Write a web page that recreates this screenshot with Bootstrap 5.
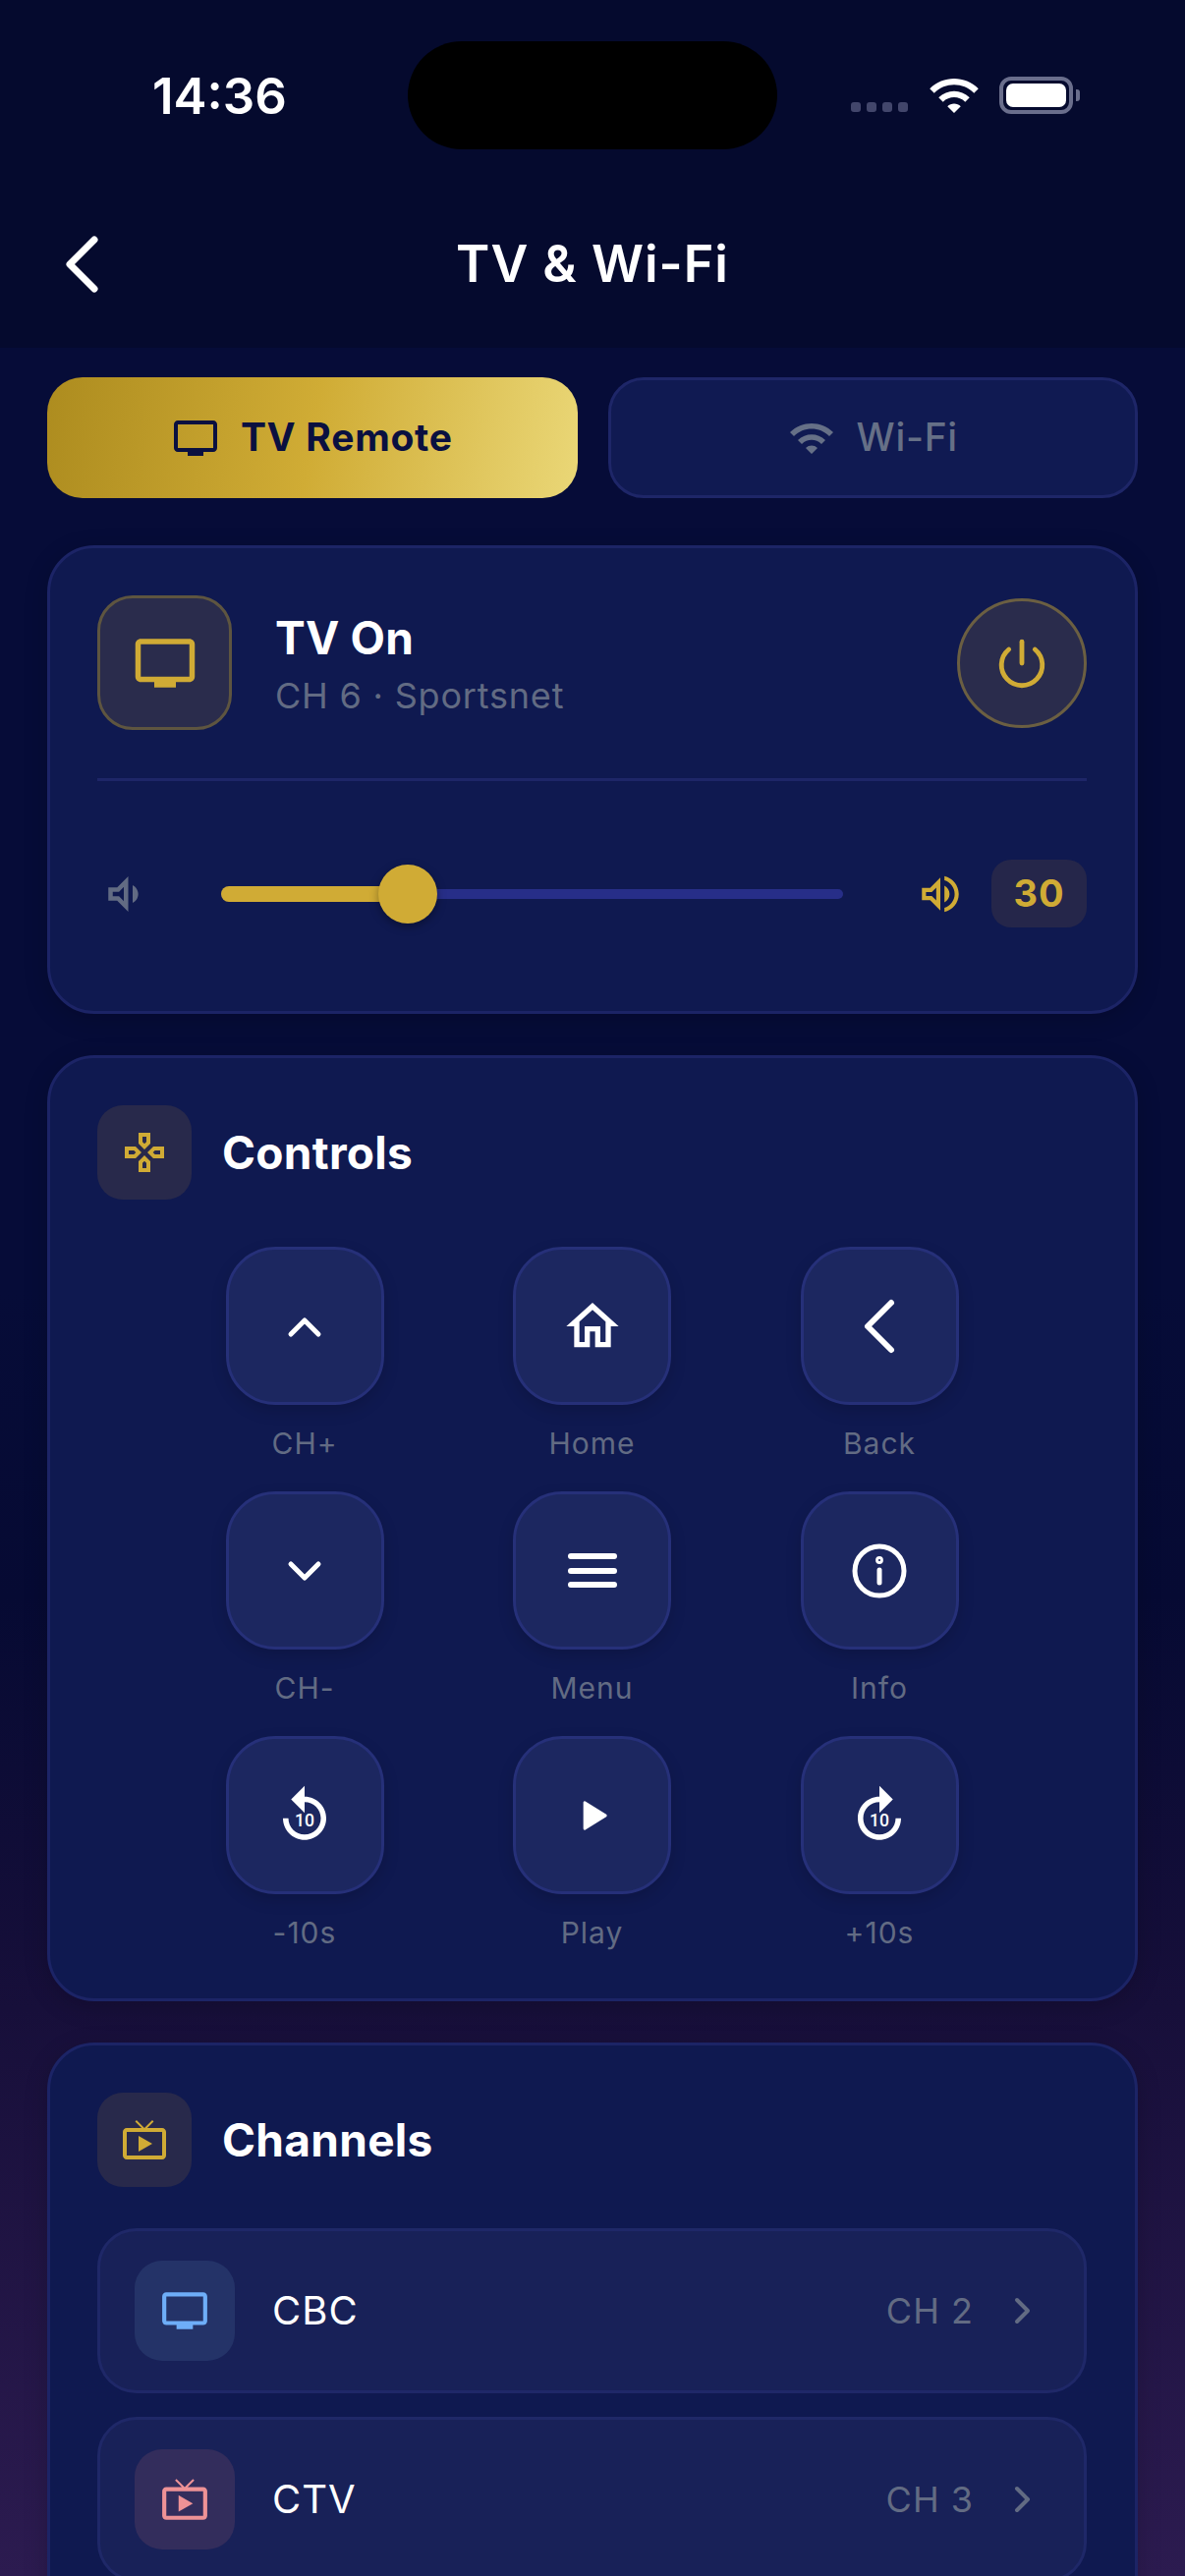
<!DOCTYPE html>
<html lang="en">

<head>
    <meta charset="UTF-8">
    <meta name="viewport" content="width=device-width, initial-scale=1.0">
    <title>TV &amp; Wi-Fi</title>
    <link href="https://cdn.jsdelivr.net/npm/bootstrap@5.3.0/dist/css/bootstrap.min.css" rel="stylesheet">
    <style>
        html, body {
            height: 2622px;
            overflow: hidden;
        }

        body {
            font-family: Inter, "Liberation Sans", sans-serif;
            color: #fff;
            background: linear-gradient(180deg, #060c38 0%, #060c38 50%, #060a33 62%, #170f3a 78%, #2c1b50 100%);
        }

        svg {
            display: block;
            flex-shrink: 0;
        }

        .top-head {
            height: 354px;
            background: #050a2e;
        }

        .status-row {
            height: 194px;
            padding: 0 107px 0 155px;
        }

        .clock {
            font-size: 51px;
            font-weight: 600;
            line-height: 1;
            margin-top: 1px;
        }

        .island {
            position: absolute;
            left: 415px;
            top: 42px;
            width: 376px;
            height: 110px;
            border-radius: 55px;
            background: #000;
        }

        .sig-row {
            column-gap: 6px;
            margin-top: 24px;
            margin-right: 20px;
        }

        .sig-dot {
            width: 10px;
            height: 10px;
            border-radius: 3px;
            background: #42466b;
        }

        .wifi-mark {
            margin-right: 19px;
        }

        .batt {
            width: 75px;
            height: 38px;
            border: 4px solid #6a6e8c;
            border-radius: 12px;
            padding: 3px;
        }

        .batt span {
            display: block;
            height: 100%;
            border-radius: 7px;
            background: #fff;
        }

        .batt-tip {
            width: 4px;
            height: 12px;
            border-radius: 0 3px 3px 0;
            background: #6a6e8c;
            margin-left: 3px;
        }

        .nav-row {
            height: 160px;
            padding: 0 0 10px 60px;
        }

        .nav-title {
            font-size: 52px;
            font-weight: 600;
            letter-spacing: 1px;
            line-height: 1;
            flex: 1;
            text-align: center;
            margin-right: 60px;
            padding-right: 44px;
        }

        .page-body {
            padding: 30px 48px 0;
        }

        .tab-wrap {
            display: grid;
            grid-template-columns: 1fr 1fr;
            column-gap: 31px;
        }

        .tab-btn {
            height: 123px;
            border-radius: 36px;
            font-size: 39px;
            gap: 22px;
            letter-spacing: .7px;
        }

        .tab-on,
        .tab-on:hover {
            color: #0a1040;
            font-weight: 700;
            border: 0;
            background: linear-gradient(100deg, #ad8c1f 0%, #d0ac35 50%, #ead777 100%);
        }

        .tab-off,
        .tab-off:hover {
            color: #667087;
            font-weight: 500;
            border: 3px solid #1e2668;
            background: #101a52;
        }

        .panel {
            background: #0f1950;
            border: 3px solid #1c2466;
            border-radius: 48px;
            color: #fff;
            padding: 48px 49px 48px 48px;
            box-shadow: 0 6px 24px rgba(0, 0, 0, .18);
        }

        .tv-tile {
            width: 137px;
            height: 137px;
            border-radius: 36px;
            background: #2a2c4c;
            border: 3px solid #5e5540;
        }

        .state-text {
            margin-left: 44px;
            margin-top: 3px;
        }

        .state-title {
            font-size: 46px;
            font-weight: 700;
            line-height: 1;
            letter-spacing: .2px;
        }

        .state-sub {
            font-size: 36px;
            line-height: 1;
            color: #626b83;
            letter-spacing: .8px;
            margin-top: 18px;
        }

        .power-btn {
            width: 132px;
            height: 132px;
            padding: 0;
            background: #2a2c4c;
            border: 3px solid #6b5f42;
        }

        .rule-line {
            height: 3px;
            background: #1e2668;
            margin: 49px 0 80px;
        }

        .vol-track {
            position: relative;
            flex: 1;
            height: 10px;
            border-radius: 5px;
            background: #272e88;
        }

        .vol-fill {
            position: absolute;
            left: 0;
            top: -3px;
            height: 16px;
            border-radius: 8px;
            background: #d0ab35;
        }

        .vol-thumb {
            position: absolute;
            top: -25px;
            width: 60px;
            height: 60px;
            margin-left: -30px;
            border-radius: 50%;
            background: #d0ab35;
            box-shadow: 0 3px 10px rgba(0, 0, 0, .35);
        }

        .vol-low {
            margin-right: 72px;
        }

        .vol-high {
            margin: 0 27px 0 74px;
        }

        .vol-num {
            width: 97px;
            height: 69px;
            border-radius: 20px;
            background: #25264a;
            color: #d0ab35;
            font-size: 38px;
            font-weight: 700;
            letter-spacing: 1px;
        }

        .head-tile {
            width: 96px;
            height: 96px;
            border-radius: 26px;
            background: #28294b;
        }

        .panel-title {
            font-size: 46px;
            font-weight: 700;
            line-height: 1;
            margin: 0 0 0 31px;
            letter-spacing: .3px;
        }

        .key-grid {
            display: grid;
            grid-template-columns: repeat(3, 161px);
            column-gap: 131.5px;
            row-gap: 34px;
            justify-content: center;
            margin-top: 48px;
        }

        .remote-key {
            width: 161px;
            height: 161px;
            padding: 0;
            border-radius: 50px;
            background: #1c2760;
            border: 3px solid #263079;
            box-shadow: 0 6px 16px rgba(0, 0, 0, .15);
        }

        .key-name {
            font-size: 30px;
            line-height: 1;
            color: #626b83;
            letter-spacing: 1px;
            margin-top: 24px;
            white-space: nowrap;
        }

        .chan-list {
            margin-top: 42px;
            row-gap: 24px;
        }

        .chan-row {
            height: 168px;
            border-radius: 40px;
            background: #182158;
            border: 3px solid #1f2868;
            padding: 0 50px 0 35px;
        }

        .chan-tile {
            width: 102px;
            height: 102px;
            border-radius: 28px;
        }

        .tile-blue {
            background: #243368;
        }

        .tile-red {
            background: #332d5c;
        }

        .chan-name {
            font-size: 40px;
            line-height: 1;
            letter-spacing: 1px;
            margin-left: 38px;
        }

        .chan-num {
            font-size: 36px;
            line-height: 1;
            color: #626b83;
            letter-spacing: 1px;
            margin-right: 38px;
        }

        .state-panel {
            margin-top: 48px;
            height: 477px;
        }

        .keys-panel {
            margin-top: 42px;
            height: 963px;
        }

        .chans-panel {
            margin-top: 42px;
        }
    </style>
</head>

<body>
    <div class="top-head">
        <div class="status-row d-flex align-items-center justify-content-between">
            <div class="clock">14:36</div>
            <div class="island"></div>
            <div class="d-flex align-items-center">
                <div class="d-flex sig-row">
                    <div class="sig-dot"></div>
                    <div class="sig-dot"></div>
                    <div class="sig-dot"></div>
                    <div class="sig-dot"></div>
                </div>
                <svg width="54" height="54" viewBox="0 0 24 24" fill="#fff" class="wifi-mark">
                    <path d="M1 9l2 2c4.97-4.97 13.03-4.97 18 0l2-2C16.93 2.93 7.08 2.93 1 9zm8 8l3 3 3-3c-1.65-1.66-4.34-1.66-6 0zm-4-4l2 2c2.76-2.76 7.24-2.76 10 0l2-2C15.14 9.14 8.87 9.14 5 13z" />
                </svg>
                <div class="batt"><span></span></div>
                <div class="batt-tip"></div>
            </div>
        </div>
        <div class="nav-row d-flex align-items-center">
            <svg width="44" height="60" viewBox="0 0 44 60" fill="none" stroke="#fff" stroke-width="7" stroke-linecap="round" stroke-linejoin="round">
                <path d="M36 5L11 30l25 25" />
            </svg>
            <div class="nav-title">TV &amp; Wi-Fi</div>
        </div>
    </div>

    <div class="page-body">
        <div class="tab-wrap">
            <button class="btn tab-btn tab-on d-flex align-items-center justify-content-center">
                <svg width="48" height="48" viewBox="0 0 24 24" fill="currentColor">
                    <path d="M21 3H3c-1.1 0-2 .9-2 2v12c0 1.1.9 2 2 2h5v2h8v-2h5c1.1 0 1.99-.9 1.99-2L23 5c0-1.1-.9-2-2-2zm0 14H3V5h18v12z" />
                </svg>
                TV Remote
            </button>
            <button class="btn tab-btn tab-off d-flex align-items-center justify-content-center">
                <svg width="48" height="48" viewBox="0 0 24 24" fill="currentColor">
                    <path d="M1 9l2 2c4.97-4.97 13.03-4.97 18 0l2-2C16.93 2.93 7.08 2.93 1 9zm8 8l3 3 3-3c-1.65-1.66-4.34-1.66-6 0zm-4-4l2 2c2.76-2.76 7.24-2.76 10 0l2-2C15.14 9.14 8.87 9.14 5 13z" />
                </svg>
                Wi-Fi
            </button>
        </div>

        <!-- estado de la tele -->
        <div class="card panel state-panel">
            <div class="d-flex align-items-center">
                <div class="tv-tile d-flex align-items-center justify-content-center">
                    <svg width="66" height="66" viewBox="0 0 24 24" fill="#d0ab35">
                        <path d="M21 3H3c-1.1 0-2 .9-2 2v12c0 1.1.9 2 2 2h5v2h8v-2h5c1.1 0 1.99-.9 1.99-2L23 5c0-1.1-.9-2-2-2zm0 14H3V5h18v12z" />
                    </svg>
                </div>
                <div class="flex-grow-1 state-text">
                    <div class="state-title">TV On</div>
                    <div class="state-sub">CH 6 · Sportsnet</div>
                </div>
                <button class="btn power-btn rounded-circle d-flex align-items-center justify-content-center">
                    <svg width="58" height="58" viewBox="0 0 24 24" fill="none" stroke="#d0ab35" stroke-width="2" stroke-linecap="round">
                        <path d="M12 3v9" />
                        <path d="M17.5 6.2a8.6 8.6 0 1 1-11 0" />
                    </svg>
                </button>
            </div>
            <div class="rule-line"></div>
            <div class="d-flex align-items-center">
                <svg width="54" height="54" viewBox="0 0 24 24" fill="#626b83" class="vol-low">
                    <path d="M16 7.97v8.05c1.48-.73 2.5-2.25 2.5-4.02 0-1.77-1.02-3.29-2.5-4.03zM5 9v6h4l5 5V4L9 9H5zm7-.17v6.34L9.83 13H7v-2h2.83L12 8.83z" />
                </svg>
                <div class="vol-track">
                    <div class="vol-fill" style="width:30%"></div>
                    <div class="vol-thumb" style="left:30%"></div>
                </div>
                <svg width="50" height="50" viewBox="0 0 24 24" fill="#d0ab35" class="vol-high">
                    <path d="M3 9v6h4l5 5V4L7 9H3zm7-.17v6.34L7.83 13H5v-2h2.83L10 8.83zM16.5 12c0-1.77-1.02-3.29-2.5-4.03v8.05c1.48-.73 2.5-2.25 2.5-4.02zM14 3.23v2.06c2.89.86 5 3.54 5 6.71s-2.11 5.85-5 6.71v2.06c4.01-.91 7-4.49 7-8.77 0-4.28-2.99-7.86-7-8.77z" />
                </svg>
                <div class="vol-num d-flex align-items-center justify-content-center">30</div>
            </div>
        </div>

        <!-- botones del mando -->
        <div class="card panel keys-panel">
            <div class="d-flex align-items-center">
                <div class="head-tile d-flex align-items-center justify-content-center">
                    <svg width="48" height="48" viewBox="0 0 24 24" fill="#d0ab35">
                        <path d="M13 4v2.67l-1 1-1-1V4h2m7 7v2h-2.67l-1-1 1-1H20M6.67 11l1 1-1 1H4v-2h2.67M12 16.33l1 1V20h-2v-2.67l1-1M15 2H9v5.5l3 3 3-3V2zm7 7h-5.5l-3 3 3 3H22V9zM7.5 9H2v6h5.5l3-3-3-3zm4.5 4.5l-3 3V22h6v-5.5l-3-3z" />
                    </svg>
                </div>
                <h2 class="panel-title">Controls</h2>
            </div>
            <div class="key-grid">
                <div class="d-flex flex-column align-items-center">
                    <button class="btn remote-key d-flex align-items-center justify-content-center">
                        <svg width="64" height="64" viewBox="0 0 64 64" fill="none" stroke="#fff" stroke-width="5" stroke-linecap="round" stroke-linejoin="round">
                            <path d="M18 40l14-14 14 14" />
                        </svg>
                    </button>
                    <div class="key-name">CH+</div>
                </div>
                <div class="d-flex flex-column align-items-center">
                    <button class="btn remote-key d-flex align-items-center justify-content-center">
                        <svg width="64" height="64" viewBox="0 0 24 24" fill="#fff">
                            <path d="M12 5.69l5 4.5V18h-2v-6H9v6H7v-7.81l5-4.5M12 3L2 12h3v8h6v-6h2v6h6v-8h3L12 3z" />
                        </svg>
                    </button>
                    <div class="key-name">Home</div>
                </div>
                <div class="d-flex flex-column align-items-center">
                    <button class="btn remote-key d-flex align-items-center justify-content-center">
                        <svg width="64" height="64" viewBox="0 0 64 64" fill="none" stroke="#fff" stroke-width="6" stroke-linecap="round" stroke-linejoin="round">
                            <path d="M44 8L20 32l24 24" />
                        </svg>
                    </button>
                    <div class="key-name">Back</div>
                </div>
                <div class="d-flex flex-column align-items-center">
                    <button class="btn remote-key d-flex align-items-center justify-content-center">
                        <svg width="64" height="64" viewBox="0 0 64 64" fill="none" stroke="#fff" stroke-width="5" stroke-linecap="round" stroke-linejoin="round">
                            <path d="M18 25l14 14 14-14" />
                        </svg>
                    </button>
                    <div class="key-name">CH-</div>
                </div>
                <div class="d-flex flex-column align-items-center">
                    <button class="btn remote-key d-flex align-items-center justify-content-center">
                        <svg width="64" height="64" viewBox="0 0 64 64" fill="none" stroke="#fff" stroke-width="6" stroke-linecap="round">
                            <path d="M10 17h44M10 32h44M10 46h44" />
                        </svg>
                    </button>
                    <div class="key-name">Menu</div>
                </div>
                <div class="d-flex flex-column align-items-center">
                    <button class="btn remote-key d-flex align-items-center justify-content-center">
                        <svg width="64" height="64" viewBox="0 0 64 64" fill="none" stroke="#fff" stroke-width="5" stroke-linecap="round">
                            <circle cx="32" cy="32" r="25" />
                            <path d="M32 31v13" />
                            <circle cx="32" cy="21" r="1.4" />
                        </svg>
                    </button>
                    <div class="key-name">Info</div>
                </div>
                <div class="d-flex flex-column align-items-center">
                    <button class="btn remote-key d-flex align-items-center justify-content-center">
                        <svg width="66" height="66" viewBox="0 0 24 24" fill="#fff">
                            <path d="M12 5V1L7 6l5 5V7c3.3 0 6 2.7 6 6s-2.7 6-6 6-6-2.7-6-6H4c0 4.4 3.6 8 8 8s8-3.6 8-8-3.6-8-8-8z" />
                            <text x="12" y="16" text-anchor="middle" font-family="Roboto, sans-serif" font-size="6.4" font-weight="500">10</text>
                        </svg>
                    </button>
                    <div class="key-name">-10s</div>
                </div>
                <div class="d-flex flex-column align-items-center">
                    <button class="btn remote-key d-flex align-items-center justify-content-center">
                        <svg width="64" height="64" viewBox="0 0 24 24" fill="#fff" stroke="#fff" stroke-linejoin="round">
                            <path d="M9 7v10l8-5z" />
                        </svg>
                    </button>
                    <div class="key-name">Play</div>
                </div>
                <div class="d-flex flex-column align-items-center">
                    <button class="btn remote-key d-flex align-items-center justify-content-center">
                        <svg width="66" height="66" viewBox="0 0 24 24" fill="#fff">
                            <path d="M18 13c0 3.31-2.69 6-6 6s-6-2.69-6-6 2.69-6 6-6v4l5-5-5-5v4c-4.42 0-8 3.58-8 8s3.58 8 8 8 8-3.58 8-8h-2z" />
                            <text x="12" y="16" text-anchor="middle" font-family="Roboto, sans-serif" font-size="6.4" font-weight="500">10</text>
                        </svg>
                    </button>
                    <div class="key-name">+10s</div>
                </div>
            </div>
        </div>

        <!-- lista de canales -->
        <div class="card panel chans-panel">
            <div class="d-flex align-items-center">
                <div class="head-tile d-flex align-items-center justify-content-center">
                    <svg width="48" height="48" viewBox="0 0 24 24" fill="#d0ab35">
                        <path d="M9 10v8l7-4zm12-4h-7.58l3.29-3.29L16 2l-4 4h-.03l-4-4-.69.71L10.56 6H3c-1.1 0-2 .9-2 2v12c0 1.1.9 2 2 2h18c1.1 0 2-.9 2-2V8c0-1.1-.9-2-2-2zm0 14H3V8h18v12z" />
                    </svg>
                </div>
                <h2 class="panel-title">Channels</h2>
            </div>
            <div class="d-flex flex-column chan-list">
                <div class="chan-row d-flex align-items-center">
                    <div class="chan-tile tile-blue d-flex align-items-center justify-content-center">
                        <svg width="50" height="50" viewBox="0 0 24 24" fill="#6eaef8">
                            <path d="M21 3H3c-1.1 0-2 .9-2 2v12c0 1.1.9 2 2 2h5v2h8v-2h5c1.1 0 1.99-.9 1.99-2L23 5c0-1.1-.9-2-2-2zm0 14H3V5h18v12z" />
                        </svg>
                    </div>
                    <div class="chan-name flex-grow-1">CBC</div>
                    <div class="chan-num">CH 2</div>
                    <svg width="24" height="32" viewBox="0 0 24 32" fill="none" stroke="#626b83" stroke-width="4" stroke-linecap="round" stroke-linejoin="round">
                        <path d="M6 5l11 11L6 27" />
                    </svg>
                </div>
                <div class="chan-row d-flex align-items-center">
                    <div class="chan-tile tile-red d-flex align-items-center justify-content-center">
                        <svg width="50" height="50" viewBox="0 0 24 24" fill="#ee9296">
                            <path d="M9 10v8l7-4zm12-4h-7.58l3.29-3.29L16 2l-4 4h-.03l-4-4-.69.71L10.56 6H3c-1.1 0-2 .9-2 2v12c0 1.1.9 2 2 2h18c1.1 0 2-.9 2-2V8c0-1.1-.9-2-2-2zm0 14H3V8h18v12z" />
                        </svg>
                    </div>
                    <div class="chan-name flex-grow-1">CTV</div>
                    <div class="chan-num">CH 3</div>
                    <svg width="24" height="32" viewBox="0 0 24 32" fill="none" stroke="#626b83" stroke-width="4" stroke-linecap="round" stroke-linejoin="round">
                        <path d="M6 5l11 11L6 27" />
                    </svg>
                </div>
            </div>
        </div>
    </div>

    <script src="https://cdn.jsdelivr.net/npm/bootstrap@5.3.0/dist/js/bootstrap.bundle.min.js"></script>
</body>

</html>
